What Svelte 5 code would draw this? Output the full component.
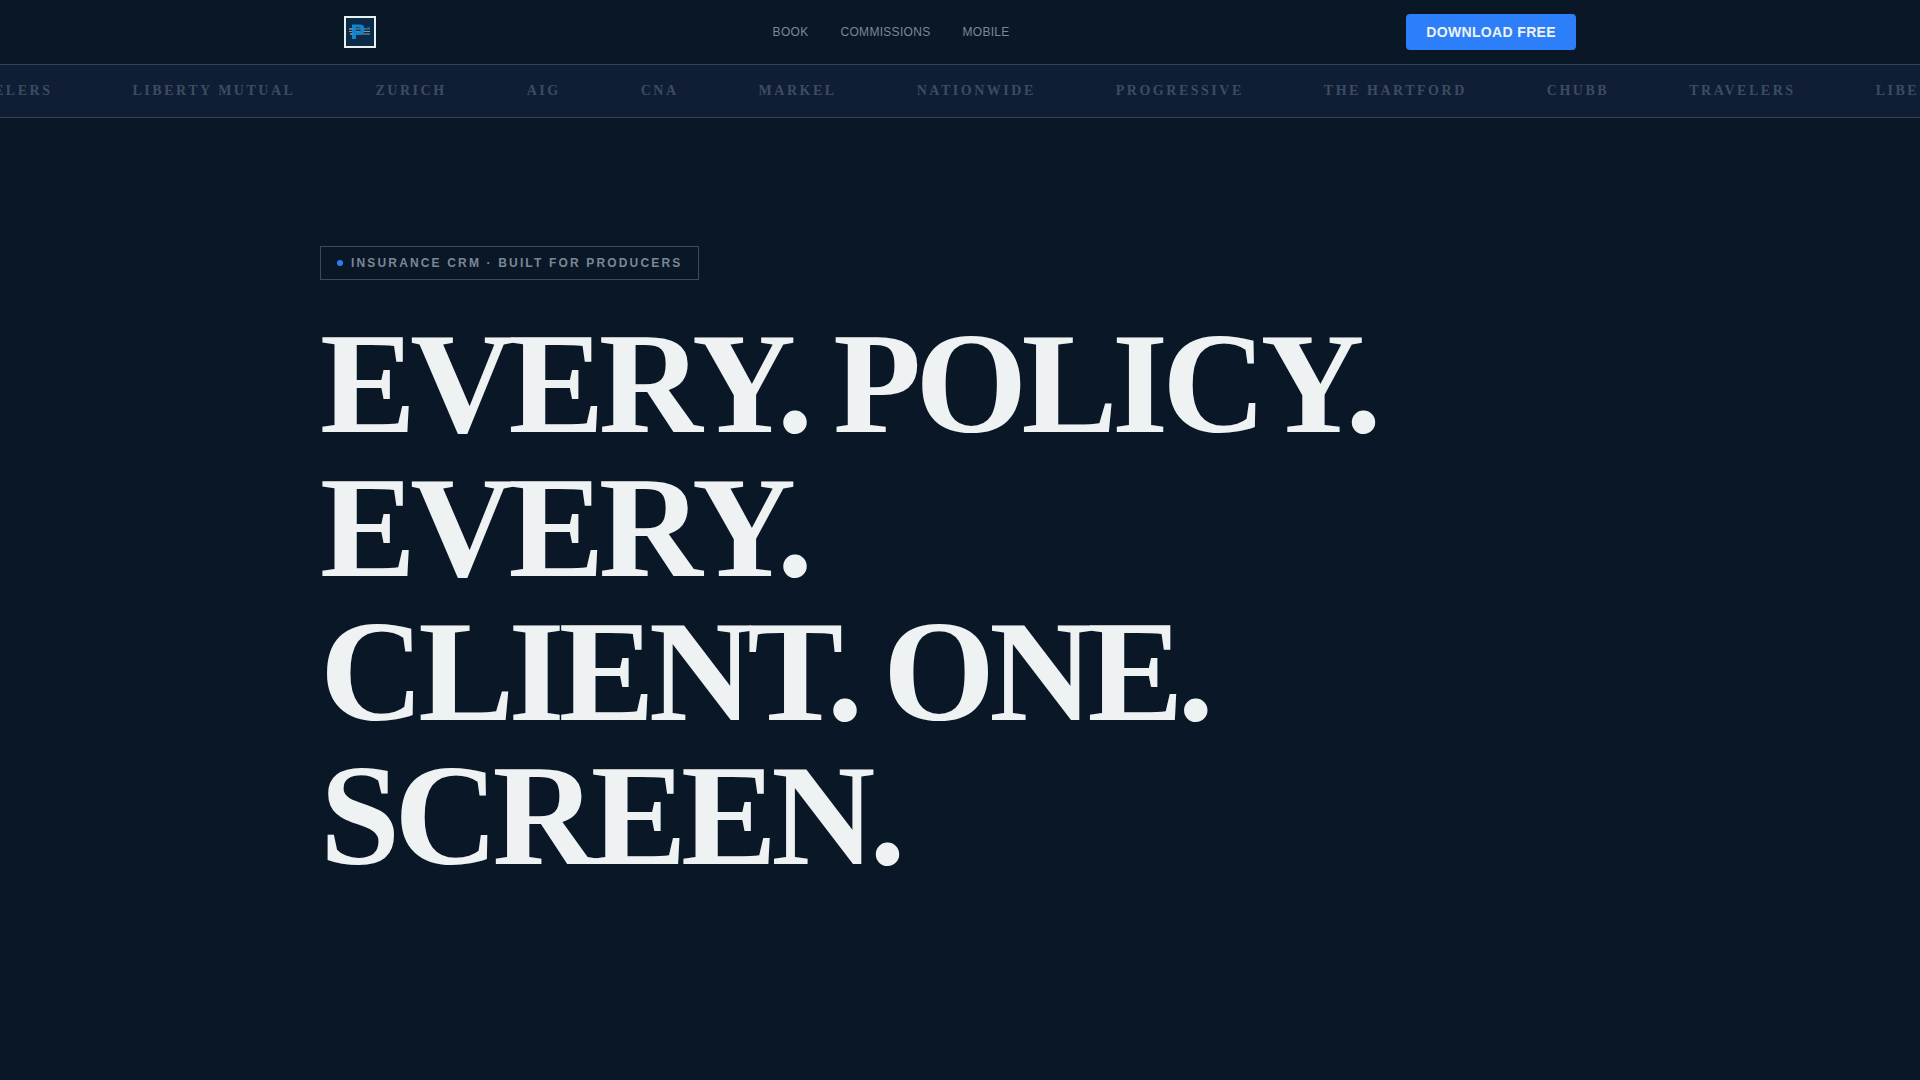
<script lang="ts">
	interface NavLink {
		label: string;
		href: string;
	}

	const links: NavLink[] = [
		{ label: 'Book', href: '#book' },
		{ label: 'Commissions', href: '#commissions' },
		{ label: 'Mobile', href: '#mobile' }
	];

	const carriers = [
		'Travelers',
		'Liberty Mutual',
		'Zurich',
		'AIG',
		'CNA',
		'Markel',
		'Nationwide',
		'Progressive',
		'The Hartford',
		'Chubb'
	];

	// repeated so the strip never runs out on wide windows
	const strip = [...carriers, ...carriers];

	const headline = [
		['Every.', 'Policy.', 'Every.'],
		['Client.', 'One.', 'Screen.']
	];
</script>

<header class="nav">
	<div class="nav-inner">
		<a class="logo" href="#top" aria-label="Home">
			<svg viewBox="0 0 32 32" width="32" height="32" aria-hidden="true">
				<rect x="1" y="1" width="30" height="30" fill="#0b2a45" stroke="#e9f0f2" stroke-width="2" />
				<path d="M5 13h21M5 15.500h21M6 18h20" stroke="#8d99a8" stroke-width="1.200" />
				<path
					d="M8 8.500h7.500q5 0 5 5t-5 5H12V23H8z M12 11.500v4h3q1.800 0 1.800-2t-1.800-2z"
					fill="#1283cf"
					fill-rule="evenodd"
				/>
				<path d="M5 13h4M5 15.500h3M6 18h3" stroke="#7f95aa" stroke-width="1" />
				<path d="M20.500 14l3-3h2.500v3z" fill="#235f8d" />
			</svg>
		</a>

		<nav class="links" aria-label="Main">
			{#each links as link}
				<a href={link.href}>{link.label}</a>
			{/each}
		</nav>

		<a class="cta" href="#download">Download Free</a>
	</div>
</header>

<section class="ticker" aria-label="Carriers">
	<ul class="track">
		{#each strip as carrier}
			<li>{carrier}</li>
		{/each}
	</ul>
</section>

<main class="hero" id="top">
	<p class="badge">
		<span class="dot"></span>
		Insurance CRM · Built for Producers
	</p>
	<h1>
		{#each headline as words}
			<span class="line">
				{#each words as word}
					<span>{word}</span>{' '}
				{/each}
			</span>
		{/each}
	</h1>
</main>

<style>
	:global(body) {
		margin: 0;
		background: #0a1727;
		font-family: 'Liberation Sans', Arial, sans-serif;
		overflow-x: hidden;
	}

	.nav-inner {
		display: flex;
		align-items: center;
		justify-content: space-between;
		box-sizing: border-box;
		max-width: 1280px;
		height: 64px;
		margin: 0 auto;
		padding: 0 24px;
	}

	.logo,
	.logo svg {
		display: block;
	}

	.links {
		display: flex;
		gap: 32px;
	}

	.links a {
		font-size: 12px;
		line-height: 16px;
		letter-spacing: 0.025em;
		text-transform: uppercase;
		text-decoration: none;
		color: #7b8794;
	}

	.links a:hover {
		color: #eff2f3;
	}

	.cta {
		padding: 8px 20px;
		border-radius: 4px;
		background: #2d7ff9;
		color: #eff2f3;
		font-size: 14px;
		font-weight: 700;
		line-height: 20px;
		letter-spacing: 0.025em;
		text-transform: uppercase;
		text-decoration: none;
	}

	.ticker {
		overflow: hidden;
		padding: 16px 0;
		border-top: 1px solid #35435a;
		border-bottom: 1px solid #35435a;
		background: #0f1e35;
	}

	.track {
		display: flex;
		gap: 80px;
		width: max-content;
		margin: 0 0 0 -54px;
		padding: 0;
		list-style: none;
	}

	.track li {
		font-family: 'Liberation Serif', 'Times New Roman', serif;
		font-size: 14px;
		font-weight: 700;
		line-height: 20px;
		letter-spacing: 0.18em;
		text-transform: uppercase;
		white-space: nowrap;
		color: #3d4c60;
	}

	.hero {
		box-sizing: border-box;
		max-width: 1280px;
		margin: 0 auto;
		padding: 128px 0;
	}

	.badge {
		display: flex;
		align-items: center;
		gap: 8px;
		width: fit-content;
		margin: 0 0 32px;
		padding: 8px 16px;
		border: 1px solid #3d4a5c;
		font-size: 12px;
		font-weight: 700;
		line-height: 16px;
		letter-spacing: 0.18em;
		text-transform: uppercase;
		color: #7b8794;
	}

	.dot {
		width: 6px;
		height: 6px;
		border-radius: 50%;
		background: #2d7ff9;
	}

	h1 {
		margin: 0;
		font-family: 'Liberation Serif', 'Times New Roman', serif;
		font-size: 144px;
		font-weight: 700;
		line-height: 1;
		letter-spacing: -0.04em;
		text-transform: uppercase;
		color: #eff2f3;
	}

	.line {
		display: flex;
		flex-wrap: wrap;
		column-gap: 0.18em;
	}

	@media (max-width: 1279px) {
		.hero {
			padding: 96px 24px;
		}

		h1 {
			font-size: 96px;
		}
	}

	@media (max-width: 768px) {
		.links {
			display: none;
		}

		h1 {
			font-size: 56px;
		}
	}
</style>
